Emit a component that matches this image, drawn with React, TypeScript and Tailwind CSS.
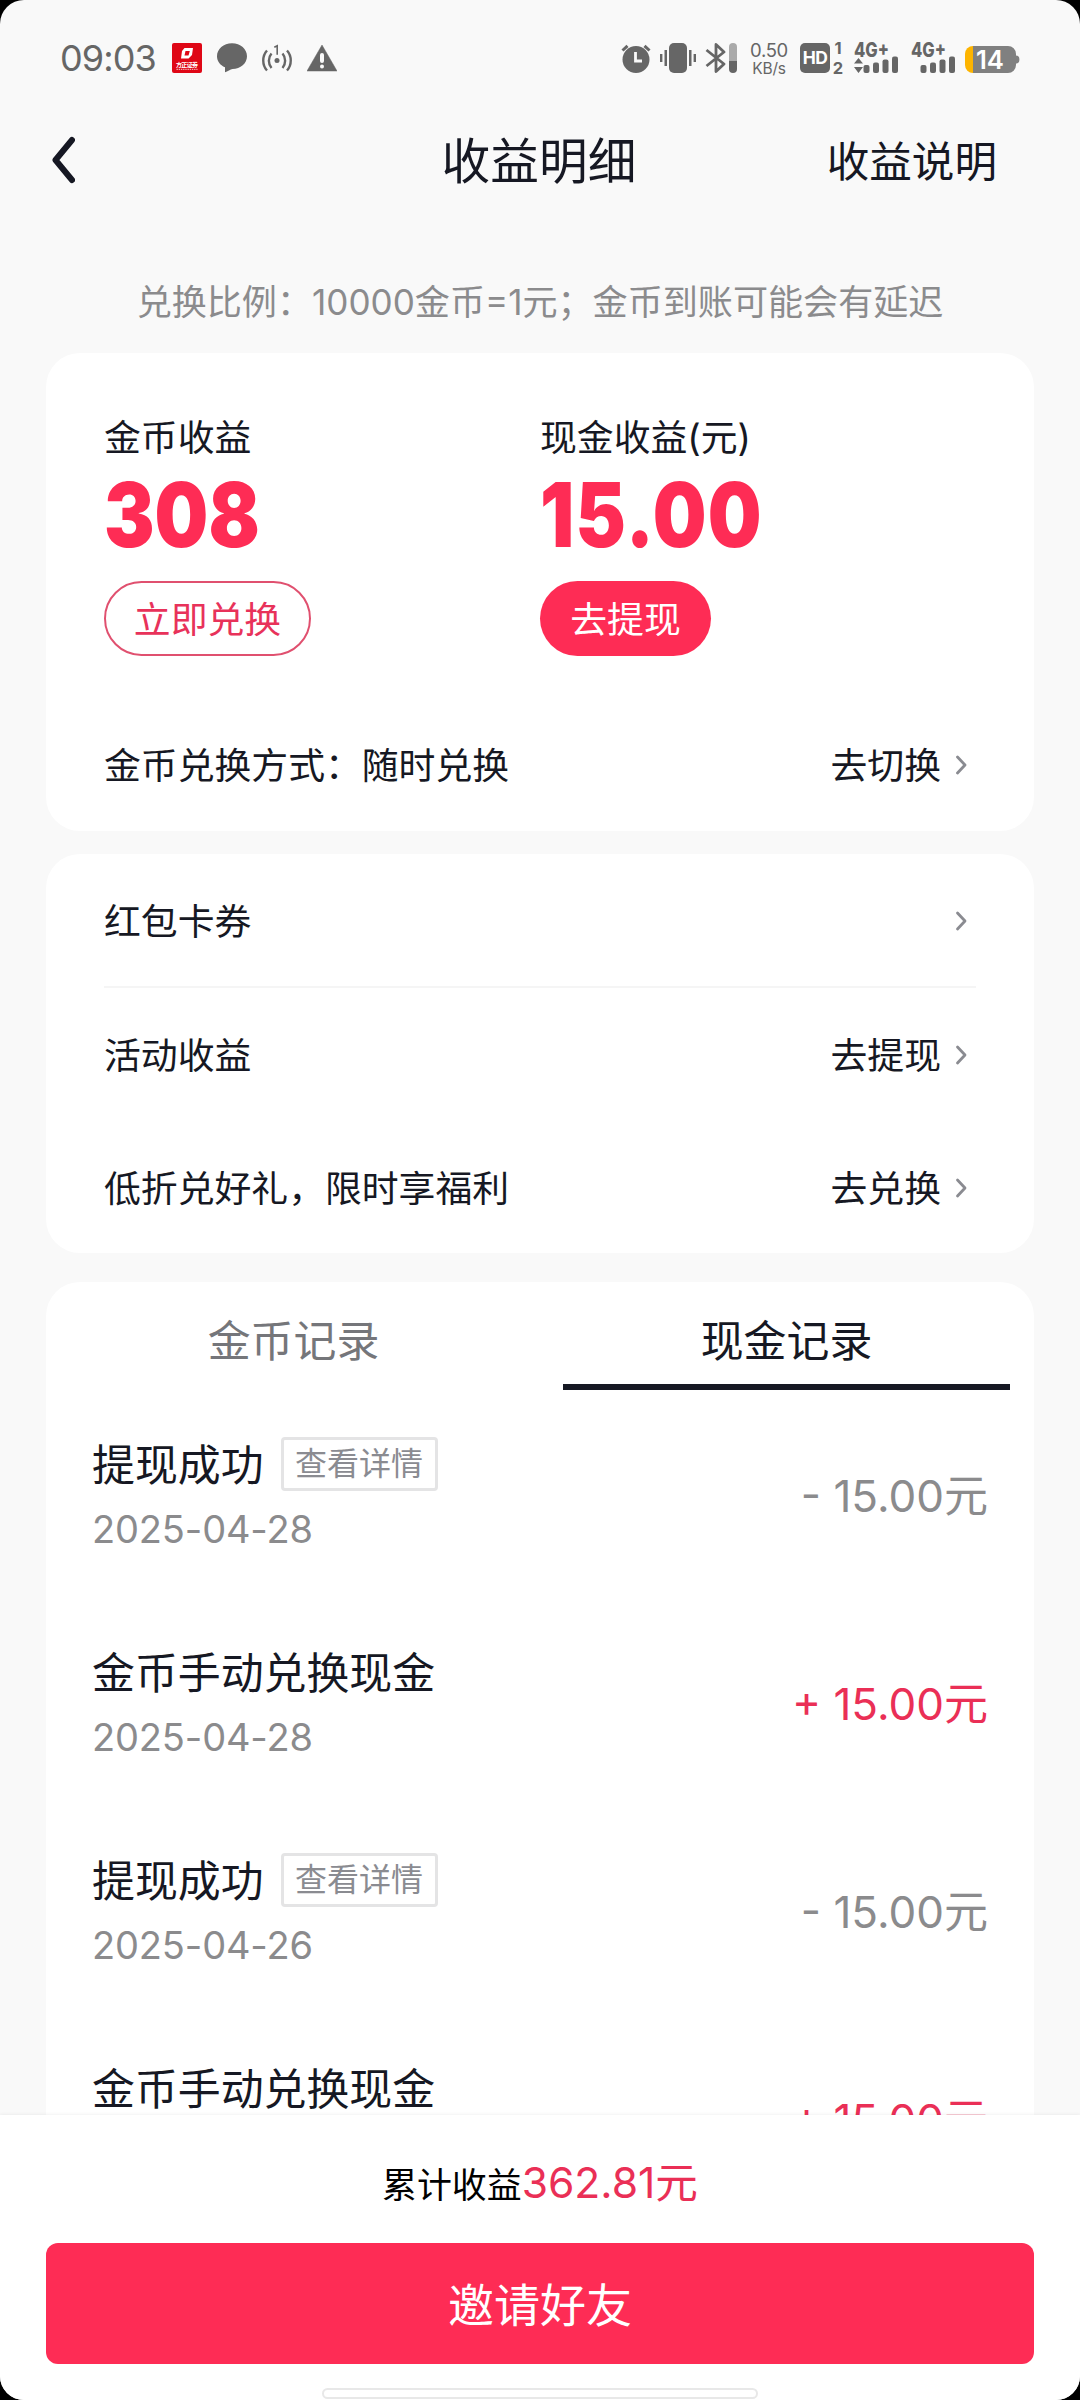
import React from "react";

const DARK = "text-[#161823]";

function Chevron() {
  return (
    <svg width="12" height="20" viewBox="0 0 12 20" fill="none" className="relative -top-px ml-[14px] block">
      <path d="M2.5 2 L10 10 L2.5 18" stroke="#8a8b91" strokeWidth="2.8" strokeLinecap="round" strokeLinejoin="round" />
    </svg>
  );
}

function Bars({ arrows }: { arrows?: boolean }) {
  return (
    <svg width="46" height="36" viewBox="0 -2 46 36" className="block overflow-visible" fill="#666">
      <text x="0" y="15" fontSize="20" fontWeight="800" fontFamily="Inter, sans-serif" textLength="35" lengthAdjust="spacingAndGlyphs">
        4G+
      </text>
      {arrows && <path d="M4.5 16 L9 21.5 H0 Z M4.5 31 L9 25 H0 Z" />}
      <rect x="9.5" y="23" width="6" height="8" rx="2" />
      <rect x="19" y="20.5" width="6" height="10.5" rx="2" />
      <rect x="28.5" y="17.5" width="6" height="13.5" rx="2" />
      <rect x="38" y="14.5" width="6" height="16.5" rx="2" />
    </svg>
  );
}

function StatusBar() {
  return (
    <div className="flex h-[116px] shrink-0 items-center pl-[60px] text-[#666]">
      <span className="w-[112px] text-[36px] leading-[44px] tracking-[-0.9px]">09:03</span>
      <svg width="30" height="30" viewBox="0 0 30 30" className="block overflow-visible">
        <rect width="30" height="30" rx="2" fill="#df0716" />
        <path d="M12.5 5 H21 L20 12 L16.5 15.5 H9 L10 8 Z M13.5 8 L12.5 12.5 H16.5 L17.8 8 Z" fill="#fff" fillRule="evenodd" />
        <text x="4" y="24" fontSize="6" fontWeight="700" fill="#fff" textLength="22" fontFamily="'Noto Sans CJK SC', sans-serif">
          方正证券
        </text>
        <path d="M4.5 26.3 H25.5" stroke="#fff" strokeWidth="0.8" strokeDasharray="1.4 0.8" />
      </svg>
      <svg width="30" height="30" viewBox="0 0 30 30" className="ml-[15px] block" fill="#666">
        <path d="M15 0.3 C23.5 0.3 30 6 30 13.3 C30 20.5 23.5 26 15.5 26 C13.5 26.3 10.5 28.3 8 29.3 V24.3 C3 22.3 0 18 0 13.3 C0 6 6.5 0.3 15 0.3 Z" />
      </svg>
      <svg width="30" height="30" viewBox="0 0 30 30" className="ml-[15px] block" fill="none" stroke="#666" strokeWidth="2.4">
        <path d="M5 7.5 C0 13 0 22 5 27.5 M9.5 10.5 C6 14.5 6 21 9.5 25 M25 7.5 C30 13 30 22 25 27.5 M20.5 10.5 C24 14.5 24 21 20.5 25" />
        <circle cx="15" cy="17.5" r="2.5" fill="#666" stroke="none" />
        <path d="M12.3 4.2 L15.2 2.7 V11.8" strokeWidth="1.6" />
      </svg>
      <svg width="30" height="30" viewBox="0 0 30 30" className="ml-[15px] block">
        <path d="M15 2 L30 28 H0 Z" fill="#666" stroke="#666" strokeWidth="0.5" strokeLinejoin="round" />
        <path d="M15 12 V18" stroke="#f9f9f9" strokeWidth="4" strokeLinecap="round" />
        <circle cx="15" cy="23.5" r="2" fill="#f9f9f9" />
      </svg>

      <svg width="30" height="30" viewBox="0 0 30 30" className="ml-[284px] block">
        <circle cx="15" cy="16.5" r="13.5" fill="#666" />
        <path d="M1.5 7.5 L6.5 2.8 M28.5 7.5 L23.5 2.8" stroke="#666" strokeWidth="3" />
        <path d="M14.5 9 V18 H21" stroke="#f9f9f9" strokeWidth="2.8" fill="none" />
      </svg>
      <svg width="36" height="30" viewBox="0 0 36 30" className="ml-[9px] block" fill="#666">
        <rect x="9" y="0" width="18" height="30" rx="5" />
        <path d="M4.5 7 H7 V23 H4.5 Z M0 11 H2.4 V19 H0 Z M29 7 H31.5 V23 H29 Z M33.6 11 H36 V19 H33.6 Z" />
      </svg>
      <svg width="32" height="30" viewBox="0 0 32 30" className="ml-[9px] block">
        <path d="M1.5 7 L19 21 L11 28.5 V1.5 L19 9 L1.5 23" fill="none" stroke="#666" strokeWidth="2.8" strokeLinejoin="round" />
        <path d="M24 18 V4 a4 4 0 0 1 8 0 V18 Z" fill="#aaa" />
        <path d="M24 18 V26 a4 4 0 0 0 8 0 V18 Z" fill="#666" />
      </svg>
      <div className="ml-[13px] flex h-[40px] w-[38px] flex-col items-center">
        <span className="text-[18.5px] leading-[24px] tracking-[-0.3px]">0.50</span>
        <span className="text-[15.5px] leading-[14px] tracking-[-0.2px]">KB/s</span>
      </div>
      <div className="ml-[12px] flex h-[30px] w-[30px] items-center justify-center rounded-[5px] bg-[#666] text-[17.5px] font-bold leading-[28px] tracking-[-0.5px] text-white">
        HD
      </div>
      <div className="ml-[2px] flex h-[40px] w-[12px] flex-col items-center text-[16.5px] font-bold">
        <span className="leading-[21px]">1</span>
        <span className="leading-[19px]">2</span>
      </div>
      <div className="ml-[10px]">
        <Bars arrows />
      </div>
      <div className="ml-[11px]">
        <Bars />
      </div>
      <svg width="55" height="32" viewBox="0 -2 55 32" className="ml-[8px] mt-[3px] block overflow-visible">
        <path d="M8 0 V27 A8 8 0 0 1 0 19 V8 A8 8 0 0 1 8 0 Z" fill="#fdb400" />
        <path d="M8 0 H43 a8 8 0 0 1 8 8 V9.5 a3 3.5 0 0 1 0 8 V19 a8 8 0 0 1 -8 8 H8 Z" fill="#808080" />
        <text x="11" y="22.5" fontSize="25" fontWeight="600" fill="#fff" fontFamily="Inter, sans-serif" textLength="28" lengthAdjust="spacingAndGlyphs">
          14
        </text>
      </svg>
    </div>
  );
}

function Row({ label, action }: { label: string; action?: string }) {
  return (
    <div className="flex items-center justify-between pr-[9px]">
      <span>{label}</span>
      <div className="flex items-center">
        {action && <span>{action}</span>}
        <Chevron />
      </div>
    </div>
  );
}

type RecordItem = { title: string; date: string; sign: "-" | "+"; detail?: boolean };

const records: RecordItem[] = [
  { title: "提现成功", date: "2025-04-28", sign: "-", detail: true },
  { title: "金币手动兑换现金", date: "2025-04-28", sign: "+" },
  { title: "提现成功", date: "2025-04-26", sign: "-", detail: true },
  { title: "金币手动兑换现金", date: "2025-04-26", sign: "+" },
];

function RecordRow({ item }: { item: RecordItem }) {
  return (
    <div className="flex h-[208px] shrink-0 items-start justify-between pl-[46px] pr-[46px]">
      <div>
        <div className="flex h-[56px] items-center">
          <span className="pt-[1px] text-[42.9px] leading-[56px]">{item.title}</span>
          {item.detail && (
            <span className="ml-[17px] flex h-[54px] w-[157px] items-center justify-center rounded-[4px] border-[3px] border-[#e4e4e5] text-[32px] leading-[40px] text-[#8a8b91]">
              查看详情
            </span>
          )}
        </div>
        <div className="mt-[13px] text-[38px] leading-[48px] tracking-[-0.15px] text-[#8b8b8d]">{item.date}</div>
      </div>
      <div
        className={
          item.sign === "+"
            ? "mt-[32px] text-[44px] leading-[56px] text-[#ea2f56]"
            : "mt-[32px] text-[44px] leading-[56px] text-[#8b8b8d]"
        }
      >
        {item.sign} 15.00元
      </div>
    </div>
  );
}

export default function App() {
  return (
    <div className="h-[2400px] w-[1080px] overflow-hidden bg-black">
      <div
        className={`flex h-[2400px] w-[1080px] flex-col overflow-hidden rounded-[24px] bg-[#f9f9f9] font-['Inter','Noto_Sans_CJK_SC',sans-serif] whitespace-nowrap ${DARK}`}
      >
        <StatusBar />
        <header className="grid h-[92px] shrink-0 grid-cols-3 items-center pl-[51px] pr-[83px]">
          <svg width="24" height="48" viewBox="0 0 24 48" fill="none" className="-mt-[4px] block">
            <path d="M21 4 L4.5 24 L21 44" stroke="#161823" strokeWidth="6" strokeLinecap="round" strokeLinejoin="round" />
          </svg>
          <h1 className="ml-[30px] text-center text-[48.7px] leading-[60px]">收益明细</h1>
          <span className="text-right text-[42.6px] leading-[56px]">收益说明</span>
        </header>

        <p className="mt-[69px] h-[50px] shrink-0 text-center text-[35.1px] leading-[50px] text-[#8b8b8d]">
          兑换比例：10000金币=1元；金币到账可能会有延迟
        </p>

        <section className="mx-[46px] mt-[26px] flex h-[478px] shrink-0 flex-col rounded-[34px] bg-white px-[58px] text-[36.85px] leading-[50px]">
          <div className="mt-[60px] grid grid-cols-2">
            <div>
              <div>金币收益</div>
              <div className="mt-[7px] h-[90px] origin-left scale-x-[0.85] text-[89px] font-black leading-[90px] text-[#fe2c55]">
                308
              </div>
              <button className="mt-[21px] flex h-[75px] w-[207px] items-center justify-center rounded-full border-2 border-[#e0506f] pt-[2px] text-[#e8325a]">
                立即兑换
              </button>
            </div>
            <div>
              <div>现金收益(元)</div>
              <div className="mt-[7px] h-[90px] origin-left scale-x-[0.85] text-[89px] font-black leading-[90px] tracking-[1.5px] text-[#fe2c55]">
                15.00
              </div>
              <button className="mt-[21px] flex h-[75px] w-[171px] items-center justify-center rounded-full bg-[#fe2c55] pt-[2px] text-white">
                去提现
              </button>
            </div>
          </div>
          <div className="mt-[85px]">
            <Row label="金币兑换方式：随时兑换" action="去切换" />
          </div>
        </section>

        <section className="mx-[46px] mt-[23px] flex h-[399px] shrink-0 flex-col rounded-[34px] bg-white px-[58px] text-[36.85px] leading-[129px]">
          <div className="border-b-2 border-[#f5f5f5] pt-[4px] leading-[128px]">
            <Row label="红包卡券" />
          </div>
          <div className="pt-[3px]">
            <Row label="活动收益" action="去提现" />
          </div>
          <div className="pt-[4px]">
            <Row label="低折兑好礼，限时享福利" action="去兑换" />
          </div>
        </section>

        <section className="mx-[46px] mt-[29px] flex min-h-0 flex-1 flex-col overflow-hidden rounded-t-[34px] bg-white">
          <div className="grid h-[108px] shrink-0 grid-cols-2 gap-[46px] px-[24px] text-center text-[42.9px] leading-[119px]">
            <div className="text-[#75767a]">金币记录</div>
            <div className="h-[108px] border-b-[6px] border-[#161823]">现金记录</div>
          </div>
          <div className="mt-[46px] flex flex-col">
            {records.map((item, i) => (
              <RecordRow key={i} item={item} />
            ))}
          </div>
        </section>

        <footer className="flex h-[285px] shrink-0 flex-col items-center bg-white shadow-[0_-1px_3px_rgba(0,0,0,0.05)]">
          <div className="mt-[38px] flex h-[60px] items-baseline leading-[60px]">
            <span className="text-[34.9px] text-black">累计收益</span>
            <span className="text-[42.6px] text-[#ea2f56]">362.81元</span>
          </div>
          <button className="mt-[30px] h-[121px] w-[988px] shrink-0 rounded-[12px] bg-[#fe2c55] pt-[3px] text-[46px] leading-[118px] text-white">
            邀请好友
          </button>
          <div className="mt-[24px] h-[11px] w-[436px] shrink-0 rounded-full border-2 border-[#e8e8e8] bg-white" />
        </footer>
      </div>
    </div>
  );
}
